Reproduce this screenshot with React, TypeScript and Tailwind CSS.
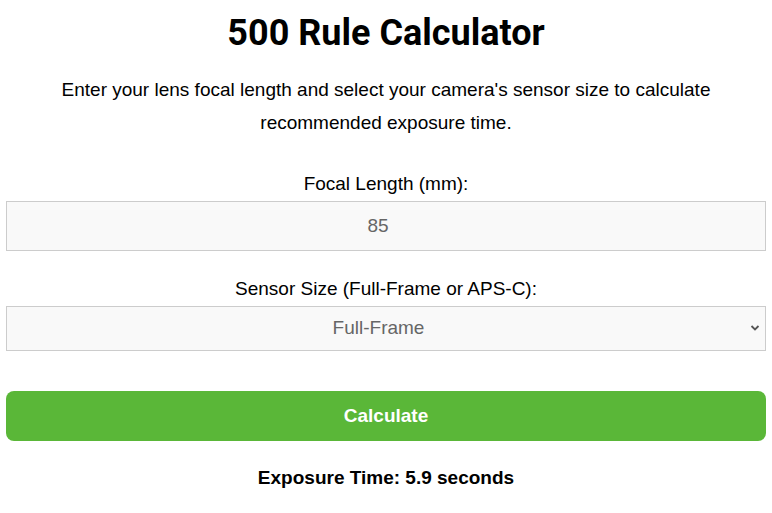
import { useState } from 'react'

export default function App() {
  const [focal, setFocal] = useState('85')
  const [sensor, setSensor] = useState('full')
  const [result, setResult] = useState('5.9')

  const calculate = () => {
    const f = parseFloat(focal) || 0
    const crop = sensor === 'full' ? 1 : 1.5
    setResult(f > 0 ? (500 / (f * crop)).toFixed(1) : '0')
  }

  return (
    <div className="min-h-screen bg-white px-[6px] text-center text-black font-['Liberation_Sans',Arial,sans-serif]">
      <h1 className="pt-[12px] text-[36px] leading-[42px] font-bold font-['Roboto',sans-serif]">500 Rule Calculator</h1>
      <p className="mt-[19px] text-[19px] leading-[33px] px-[40px]">
        Enter your lens focal length and select your camera's sensor size to calculate recommended exposure time.
      </p>

      <label className="block mt-[33px] text-[19px] leading-[24px]">Focal Length (mm):</label>
      <input
        type="number"
        value={focal}
        onChange={(e) => setFocal(e.target.value)}
        className="mt-[5px] block w-full h-[50px] pr-[16px] border border-[#cccccc] bg-[#f9f9f9] text-center text-[19px] text-[#666666] outline-none [appearance:textfield] [&::-webkit-inner-spin-button]:appearance-none"
      />

      <label className="block mt-[26px] text-[19px] leading-[24px]">Sensor Size (Full-Frame or APS-C):</label>
      <div className="relative mt-[5px]">
        <select
          value={sensor}
          onChange={(e) => setSensor(e.target.value)}
          className="block w-full h-[45px] pr-[15px] appearance-none border border-[#cccccc] bg-[#f9f9f9] text-center [text-align-last:center] text-[19px] text-[#666666] outline-none"
        >
          <option value="full">Full-Frame</option>
          <option value="apsc">APS-C</option>
        </select>
        <svg className="pointer-events-none absolute right-[6px] top-[18px]" width="10" height="8" viewBox="0 0 10 8">
          <path d="M1.5 2 L5 5.5 L8.5 2" fill="none" stroke="#555" strokeWidth="1.8" />
        </svg>
      </div>

      <button
        onClick={calculate}
        className="mt-[40px] block w-full h-[50px] rounded-[8px] bg-[#5ab738] text-white text-[19px] font-bold"
      >
        Calculate
      </button>

      <p className="mt-[25px] text-[19px] leading-[24px] font-bold">Exposure Time: {result} seconds</p>
    </div>
  )
}
